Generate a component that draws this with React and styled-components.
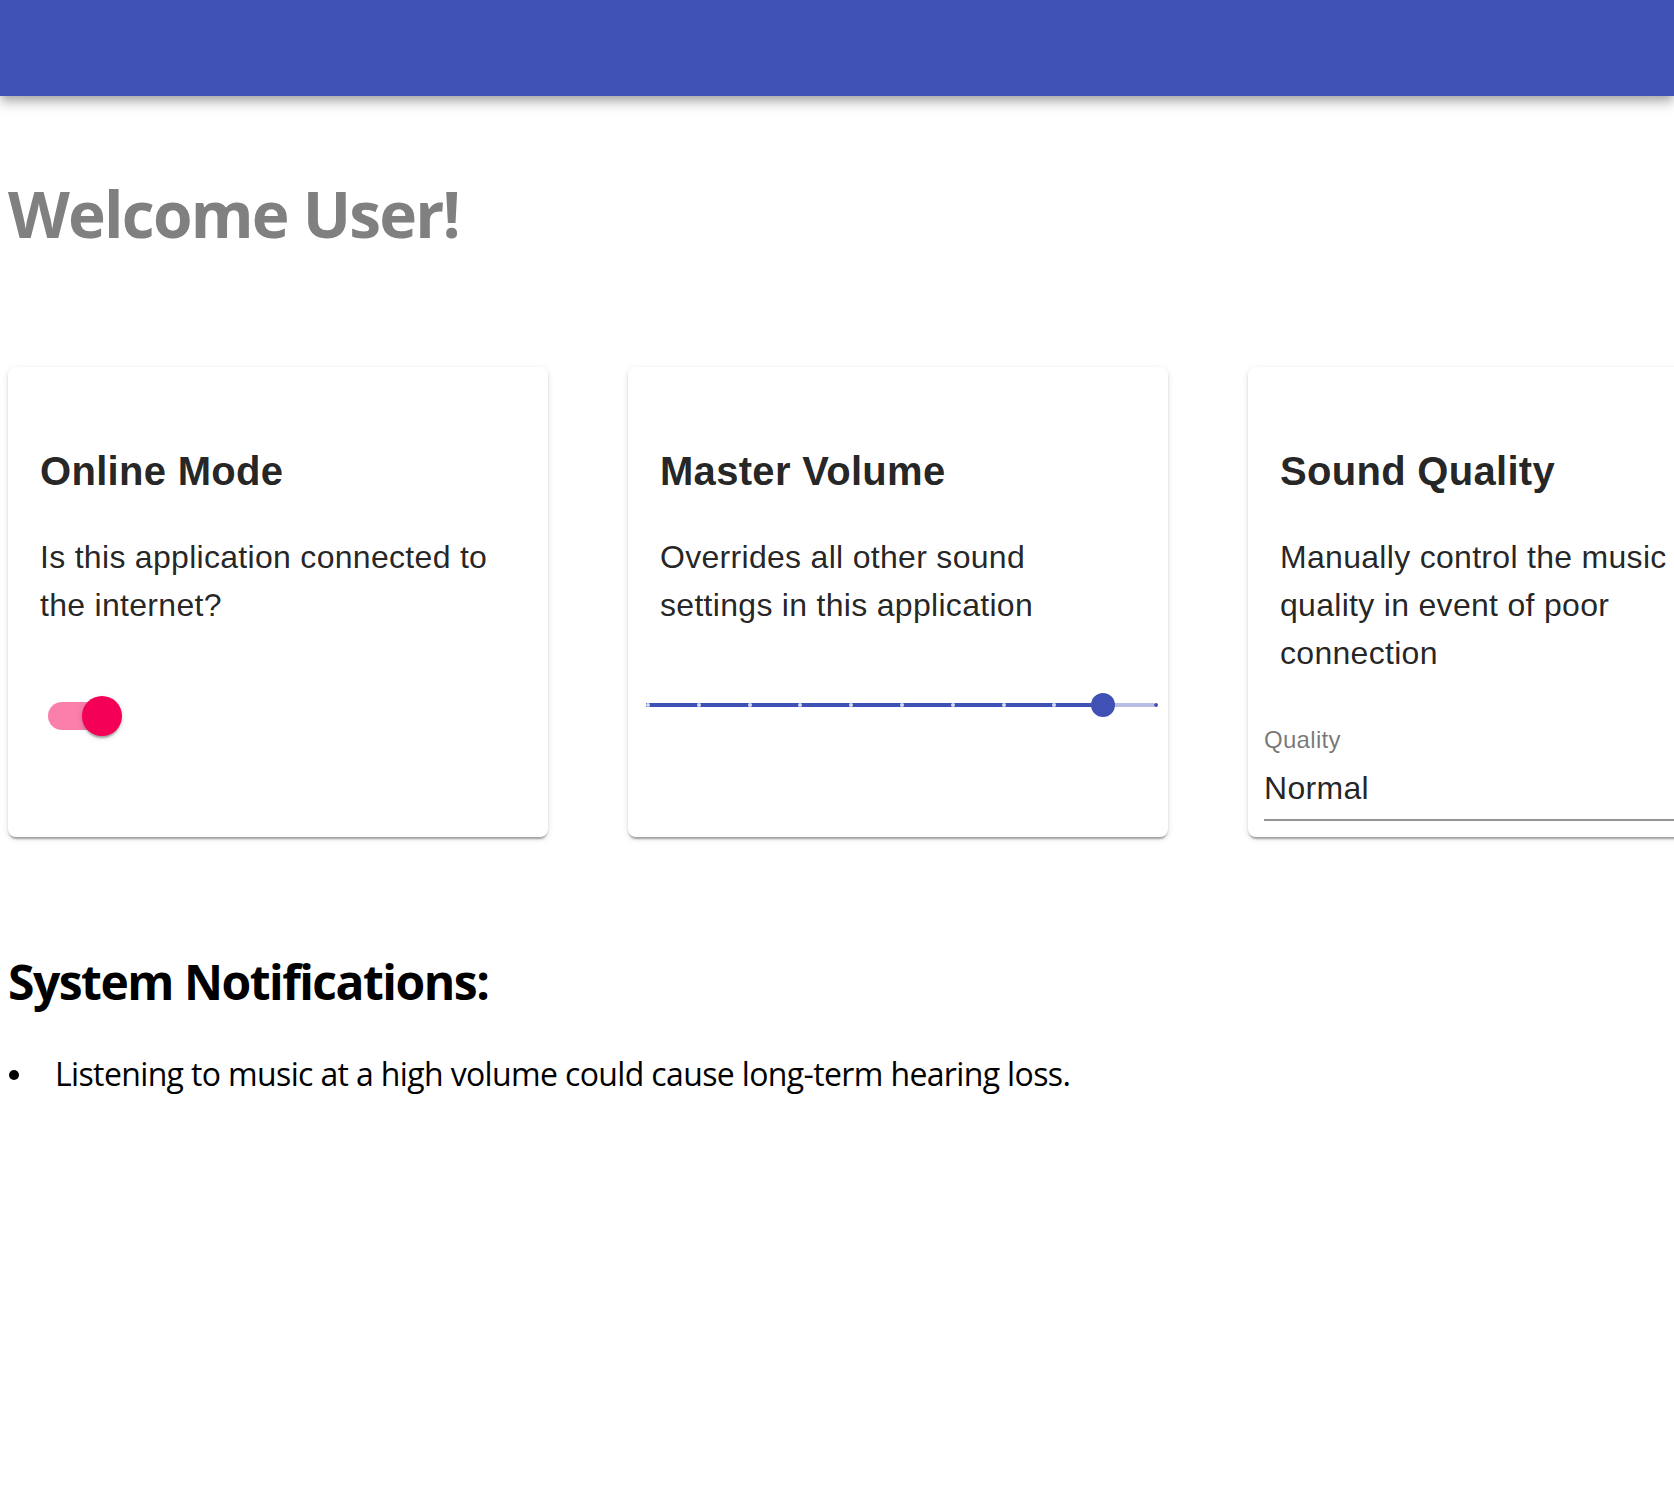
import React from 'react';
import styled, { createGlobalStyle } from 'styled-components';

const GlobalStyle = createGlobalStyle`
  html, body {
    margin: 0;
    padding: 0;
    background: #ffffff;
  }
  body {
    overflow-x: hidden;
    font-family: "Open Sans", "Noto Sans", sans-serif;
    color: #000000;
  }
`;

const Page = styled.div`
  min-height: 1512px;
`;

const AppBar = styled.header`
  height: 96px;
  background: #3f51b5;
  box-shadow: 0px 4px 8px -2px rgba(0, 0, 0, 0.2),
    0px 8px 10px 0px rgba(0, 0, 0, 0.14),
    0px 2px 20px 0px rgba(0, 0, 0, 0.12);
`;

const Main = styled.main`
  padding: 0 8px;
`;

const Welcome = styled.h1`
  margin: 78px 0 113px;
  font-size: 64px;
  line-height: 80px;
  font-weight: 700;
  letter-spacing: -1.8px;
  color: #808080;
`;

const CardRow = styled.div`
  display: flex;
  gap: 80px;
  align-items: stretch;
`;

const Card = styled.div`
  flex: 0 0 540px;
  display: flex;
  flex-direction: column;
  background: #ffffff;
  border-radius: 8px;
  box-shadow: 0px 4px 2px -2px rgba(0, 0, 0, 0.2),
    0px 2px 2px 0px rgba(0, 0, 0, 0.14),
    0px 2px 6px 0px rgba(0, 0, 0, 0.12);
  font-family: "Liberation Sans", Arial, sans-serif;
  letter-spacing: 0.3px;
  color: rgba(0, 0, 0, 0.87);
`;

const CardContent = styled.div`
  padding: 32px;
`;

const CardTitle = styled.h2`
  margin: 40px 0 30px;
  font-size: 40px;
  line-height: 64px;
  font-weight: 700;
`;

const CardText = styled.p`
  margin: 0;
  font-size: 32px;
  line-height: 48px;
`;

const CardActions = styled.div`
  display: flex;
  align-items: center;
  padding: 16px;
`;

const SwitchRoot = styled.span`
  position: relative;
  display: inline-flex;
  flex-shrink: 0;
  width: 116px;
  height: 76px;
  margin-top: 1px;
  padding: 24px;
  box-sizing: border-box;
`;

const SwitchTrack = styled.span`
  width: 100%;
  height: 100%;
  border-radius: 14px;
  background: #f50057;
  opacity: ${(p) => (p.$checked ? 0.5 : 0.38)};
`;

const SwitchThumb = styled.span`
  position: absolute;
  top: 18px;
  left: ${(p) => (p.$checked ? 58 : 18)}px;
  width: 40px;
  height: 40px;
  border-radius: 50%;
  background: #f50057;
  box-shadow: 0px 4px 2px -2px rgba(0, 0, 0, 0.2),
    0px 2px 2px 0px rgba(0, 0, 0, 0.14),
    0px 2px 6px 0px rgba(0, 0, 0, 0.12);
`;

const SliderRoot = styled.span`
  position: relative;
  display: block;
  width: 100%;
  height: 4px;
  margin: 0 -2px 0 2px;
  padding: 26px 0;
  color: #3f51b5;
`;

const SliderRail = styled.span`
  position: absolute;
  top: 26px;
  left: 0;
  width: 100%;
  height: 4px;
  background: currentColor;
  opacity: 0.38;
`;

const SliderTrack = styled.span`
  position: absolute;
  top: 26px;
  left: 0;
  height: 4px;
  background: currentColor;
`;

const SliderMark = styled.span`
  position: absolute;
  top: 26px;
  width: 4px;
  height: 4px;
  border-radius: 2px;
  background: ${(p) => (p.$active ? '#ffffff' : 'currentColor')};
  opacity: ${(p) => (p.$active ? 0.8 : 1)};
`;

const SliderThumb = styled.span`
  position: absolute;
  top: 16px;
  width: 24px;
  height: 24px;
  margin-left: -12px;
  border-radius: 50%;
  background: currentColor;
`;

const Field = styled.div`
  display: flex;
  flex-direction: column;
  width: 100%;
`;

const FieldLabel = styled.label`
  margin: 3px 0 5px;
  font-size: 24px;
  line-height: 24px;
  color: rgba(0, 0, 0, 0.54);
`;

const SelectBox = styled.div`
  position: relative;
  display: flex;
  align-items: center;
  padding: 12px 48px 12px 0;
  font-size: 32px;
  line-height: 38px;
  color: rgba(0, 0, 0, 0.87);
  border-bottom: 2px solid rgba(0, 0, 0, 0.42);
  cursor: pointer;
`;

const SelectArrow = styled.svg`
  position: absolute;
  right: 0;
  top: 14px;
  width: 48px;
  height: 48px;
  fill: rgba(0, 0, 0, 0.54);
`;

const SectionTitle = styled.h2`
  margin: 115px 0 40px;
  font-size: 48px;
  line-height: 60px;
  font-weight: 700;
  letter-spacing: -1.5px;
`;

const NoticeList = styled.ul`
  margin: 0;
  padding: 0;
  list-style: none;
  font-size: 32px;
  line-height: 44px;
`;

const NoticeItem = styled.li`
  display: flex;
  align-items: center;
  letter-spacing: -0.64px;

  &::before {
    content: "";
    flex: none;
    width: 10px;
    height: 10px;
    margin: 2px 36px 0 1px;
    border-radius: 50%;
    background: currentColor;
  }
`;

const Switch = ({ checked }) => (
  <SwitchRoot>
    <SwitchTrack $checked={checked} />
    <SwitchThumb $checked={checked} />
  </SwitchRoot>
);

const Slider = ({ value, step, max }) => {
  const marks = [];
  for (let v = 0; v <= max; v += step) marks.push(v);
  const pct = (value / max) * 100;
  return (
    <SliderRoot>
      <SliderRail />
      <SliderTrack style={{ width: `${pct}%` }} />
      {marks.map((m) => (
        <SliderMark key={m} $active={m < value} style={{ left: `${(m / max) * 100}%` }} />
      ))}
      <SliderThumb style={{ left: `${pct}%` }} />
    </SliderRoot>
  );
};

const App = () => {
  return (
    <Page>
      <GlobalStyle />
      <AppBar />
      <Main>
        <Welcome>Welcome User!</Welcome>
        <CardRow>
          <Card>
            <CardContent>
              <CardTitle>Online Mode</CardTitle>
              <CardText>Is this application connected to the internet?</CardText>
            </CardContent>
            <CardActions>
              <Switch checked />
            </CardActions>
          </Card>
          <Card>
            <CardContent>
              <CardTitle>Master Volume</CardTitle>
              <CardText>Overrides all other sound settings in this application</CardText>
            </CardContent>
            <CardActions>
              <Slider value={90} step={10} max={100} />
            </CardActions>
          </Card>
          <Card>
            <CardContent>
              <CardTitle>Sound Quality</CardTitle>
              <CardText>Manually control the music quality in event of poor connection</CardText>
            </CardContent>
            <CardActions>
              <Field>
                <FieldLabel>Quality</FieldLabel>
                <SelectBox>
                  Normal
                  <SelectArrow viewBox="0 0 24 24">
                    <path d="M7 10l5 5 5-5z" />
                  </SelectArrow>
                </SelectBox>
              </Field>
            </CardActions>
          </Card>
        </CardRow>
        <SectionTitle>System Notifications:</SectionTitle>
        <NoticeList>
          <NoticeItem>Listening to music at a high volume could cause long-term hearing loss.</NoticeItem>
        </NoticeList>
      </Main>
    </Page>
  );
};

export default App;
